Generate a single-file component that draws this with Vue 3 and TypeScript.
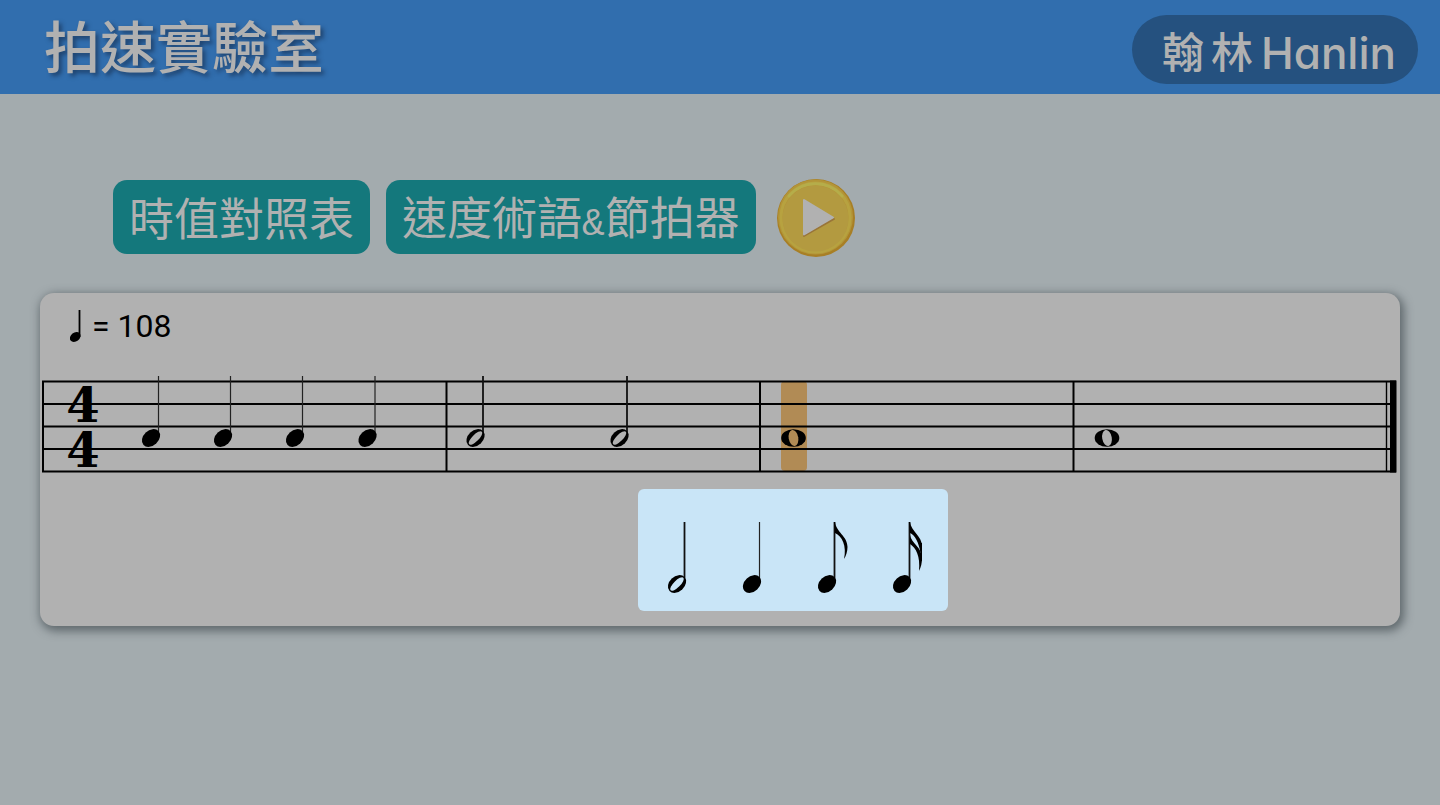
<script setup lang="ts">
import { ref } from 'vue'

type NoteKind = 'half' | 'quarter' | 'eighth' | 'sixteenth'

interface StemNote {
  kind: NoteKind
  x: number
}

const staffLines: number[] = [9.5, 32, 54.5, 77, 99.5]
const barLines: number[] = [3, 406.5, 720, 1033.5]

const stemNotes: StemNote[] = [
  { kind: 'quarter', x: 111 },
  { kind: 'quarter', x: 183 },
  { kind: 'quarter', x: 255 },
  { kind: 'quarter', x: 327.5 },
  { kind: 'half', x: 435.5 },
  { kind: 'half', x: 579.5 },
]

const wholeNotes: number[] = [753.5, 1067]

const choices: { kind: NoteKind; label: string }[] = [
  { kind: 'half', label: '二分音符' },
  { kind: 'quarter', label: '四分音符' },
  { kind: 'eighth', label: '八分音符' },
  { kind: 'sixteenth', label: '十六分音符' },
]

const playing = ref(false)
</script>

<template>
  <div class="page">
    <header class="top">
      <h1 class="title">拍速實驗室</h1>
      <div class="brand">
        <span class="brand-zh"><span>翰</span><span>林</span></span>
        <span class="brand-en">Hanlin</span>
      </div>
    </header>

    <main>
      <div class="toolbar">
        <button type="button" class="tab">時值對照表</button>
        <button type="button" class="tab">速度術語<span class="amp">&amp;</span>節拍器</button>
        <button type="button" class="play" aria-label="播放" :aria-pressed="playing" @click="playing = !playing">
          <svg viewBox="0 0 78 78" aria-hidden="true">
            <circle cx="39" cy="39" r="39" fill="#a87f25" />
            <circle cx="38.5" cy="38" r="37.5" fill="#b39538" />
            <circle cx="38.5" cy="38.5" r="34.5" fill="none" stroke="#b7a240" stroke-width="3" />
            <path d="M12 17 A35 35 0 0 1 65 17" fill="none" stroke="#b5ad4a" stroke-width="3" stroke-linecap="round" />
            <circle cx="38.5" cy="39.5" r="33" fill="#b39a40" />
            <path d="M27 22 V57 L57 40 Z" fill="#997538" stroke="#997538" stroke-width="2" stroke-linejoin="round" />
            <path d="M27 21 V55.500 L56 38.500 Z" fill="#b1b1b1" stroke="#b1b1b1" stroke-width="2" stroke-linejoin="round" />
          </svg>
        </button>
      </div>

      <section class="card">
        <div class="tempo">
          <svg class="tempo-note" viewBox="0 0 12 32" aria-hidden="true">
            <path d="M9.500 0 V27" stroke="#000" stroke-width="1.8" />
            <ellipse cx="5.200" cy="27" rx="5.800" ry="4.400" transform="rotate(-38 5.2 27)" />
          </svg>
          <span class="equals">=</span>
          <span>108</span>
        </div>

        <svg class="score" viewBox="0 0 1360 104" role="img" aria-label="4/4">
          <rect class="cursor" x="741" y="9" width="26" height="90" rx="4" />
          <path v-for="y in staffLines" :key="'l' + y" :d="`M2 ${y} H1356`" class="line" />
          <path v-for="x in barLines" :key="'b' + x" :d="`M${x} 9 V100`" class="bar" />
          <path d="M1346.500 9 V100" class="thin" />
          <rect x="1350" y="8.500" width="6.500" height="92" />
          <text class="meter" x="43" y="50" text-anchor="middle">4</text>
          <text class="meter" x="43" y="95" text-anchor="middle">4</text>

          <g v-for="n in stemNotes" :key="'n' + n.x" :transform="`translate(${n.x} 66)`">
            <path d="M7.500 -62 V-3" class="stem" :class="{ light: n.kind === 'quarter' }" />
            <ellipse rx="10.200" ry="7.600" transform="rotate(-43)" />
            <ellipse v-if="n.kind === 'half'" class="hole" rx="9" ry="3.300" transform="rotate(-45)" />
          </g>

          <g v-for="(x, i) in wholeNotes" :key="'w' + x" :transform="`translate(${x} 66)`">
            <ellipse rx="12.300" ry="8.800" />
            <ellipse :class="i === 0 ? 'hole-lit' : 'hole'" rx="4.800" ry="8.200" transform="rotate(-10)" />
          </g>
        </svg>

        <div class="choices">
          <button v-for="c in choices" :key="c.kind" type="button" class="choice" :aria-label="c.label">
            <svg viewBox="-37 -104 75 122" aria-hidden="true">
              <path d="M7.500 -71 V-12" class="stem" :class="{ light: c.kind === 'quarter' }" />
              <g transform="translate(0 -9)">
                <ellipse rx="10.200" ry="7.600" transform="rotate(-43)" />
                <ellipse v-if="c.kind === 'half'" class="hole-blue" rx="9" ry="3.300" transform="rotate(-45)" />
              </g>
              <path
                v-if="c.kind === 'eighth'"
                d="M7 -71 H8 C9 -61 20.500 -57 20.500 -46 C20.500 -42 19 -37 17 -34 C20 -47 15 -57 8 -60 Z"
              />
              <template v-if="c.kind === 'sixteenth'">
                <path d="M7 -71 H8 C9 -62 20 -57 20 -47 C20 -43 19.500 -42 18.500 -40 C17 -50 13 -58 8 -60 Z" />
                <path d="M8 -58 C9 -50 20 -46 20 -35 C20 -30 19 -26 17 -22 C18.500 -37 14 -45 8 -49 Z" />
                <path d="M19.500 -50 V-32" stroke="#000" stroke-width="1" />
              </template>
            </svg>
          </button>
        </div>
      </section>
    </main>
  </div>
</template>

<style>
body {
  margin: 0;
  background: #a3abae;
}
</style>

<style scoped>
.page {
  min-height: 100vh;
  background: #a3abae;
  font-family: 'Noto Sans CJK TC', sans-serif;
}
.top {
  display: flex;
  align-items: center;
  justify-content: space-between;
  box-sizing: border-box;
  height: 94px;
  padding: 0 22px 0 44px;
  background: #316eae;
  color: #b1b1b1;
}
.title {
  margin: 0;
  font-size: 56px;
  line-height: 88px;
  height: 94px;
  font-weight: 500;
  text-shadow: 3px 3px 4px rgba(20, 40, 70, 0.6);
}
.brand {
  display: flex;
  align-items: center;
  gap: 8px;
  box-sizing: border-box;
  height: 69px;
  margin-top: 5px;
  padding: 0 22px 0 30px;
  border-radius: 35px;
  background: #25517f;
}
.brand-zh {
  display: flex;
  gap: 7px;
  font-size: 42px;
  line-height: 68px;
  font-weight: 500;
}
.brand-en {
  padding-top: 6px;
  font-family: Inter, Lato, sans-serif;
  font-feature-settings: 'cv11';
  font-size: 44px;
  line-height: 64px;
  font-weight: 500;
}
.toolbar {
  display: flex;
  align-items: center;
  padding: 85px 40px 0 113px;
  gap: 16px;
}
.tab {
  height: 74px;
  margin-bottom: 2px;
  padding: 0 16px;
  border: 0;
  border-radius: 14px;
  background: #14787c;
  color: #b1b1b1;
  font-family: inherit;
  font-size: 45px;
  line-height: 72px;
  font-weight: 400;
  white-space: nowrap;
  cursor: pointer;
}
.amp {
  font-family: 'Liberation Mono', monospace;
  font-size: 38px;
}
.play {
  width: 78px;
  height: 78px;
  margin-left: 5px;
  padding: 0;
  border: 0;
  border-radius: 50%;
  background: none;
  cursor: pointer;
}
.play svg,
.choice svg {
  display: block;
  width: 100%;
  height: 100%;
}
.card {
  margin: 36px 40px 0;
  padding-bottom: 15px;
  border-radius: 14px;
  background: #b1b1b1;
  box-shadow: 2px 3px 10px 2px rgba(50, 60, 65, 0.6);
}
.tempo {
  display: flex;
  align-items: center;
  height: 66px;
  padding-left: 30px;
  color: #000;
  font-family: Roboto, 'Liberation Sans', sans-serif;
  font-size: 32px;
  line-height: 66px;
}
.tempo-note {
  width: 12px;
  height: 32px;
}
.equals {
  margin: 0 8px 0 10px;
}
.score {
  display: block;
  width: 100%;
  margin-top: 13px;
  overflow: visible;
}
.cursor {
  fill: #b18b55;
}
.line,
.bar {
  stroke: #000;
  stroke-width: 2;
}
.thin {
  stroke: #000;
  stroke-width: 1.4;
}
.stem {
  stroke: #111;
  stroke-width: 1.8;
}
.stem.light {
  stroke: #222;
  stroke-width: 1.2;
}
.hole {
  fill: #b1b1b1;
}
.hole-lit {
  fill: #b18b55;
}
.hole-blue {
  fill: #c9e5f7;
}
.meter {
  font-family: 'DejaVu Serif', serif;
  font-weight: 700;
  font-size: 48px;
}
.choices {
  display: flex;
  box-sizing: border-box;
  width: 310px;
  margin: 13px 0 0 44%;
  padding: 0 8px 0 2px;
  border-radius: 6px;
  background: #c9e5f7;
}
.choice {
  flex: 1;
  height: 122px;
  padding: 0;
  border: 0;
  background: none;
  cursor: pointer;
}
</style>
